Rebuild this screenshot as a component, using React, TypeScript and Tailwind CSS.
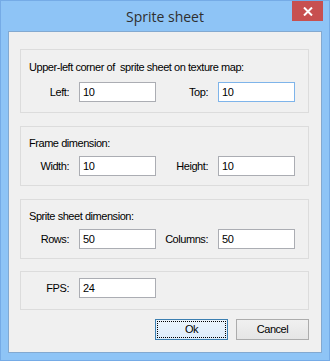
const font = "font-['Liberation_Sans',Arial,sans-serif] text-[11px] leading-[13px] tracking-[-0.45px] text-black";

function Field({ label, value, focused = false, labelW }: { label: string; value: string; focused?: boolean; labelW: string }) {
	return (
		<>
			<span className={`${labelW} text-right pr-[10px] shrink-0`}>{label}</span>
			<div
				className={`w-[77px] h-[20px] shrink-0 bg-white border flex items-center pl-[3px] ${
					focused ? 'border-[#7eb4ea]' : 'border-[#abadb3]'
				}`}
			>
				{value}
			</div>
		</>
	)
}

export default function App() {
	return (
		<div className="w-[330px] h-[361px] bg-[#8ec4f6] border border-[#75abe6] flex flex-col">
			{/* title bar */}
			<div className="relative h-[30px] shrink-0">
				<div className="absolute inset-x-0 top-[6px] text-center font-['Open_Sans','Noto_Sans',sans-serif] text-[14px] leading-[20px] text-[#2f2f2f]">
					Sprite sheet
				</div>
				<div className="absolute top-0 right-[6px] w-[31px] h-[20px] bg-[#c75050] flex items-center justify-center">
					<svg width="10" height="9" viewBox="0 0 10 9">
						<path d="M1 0.5 L9 8.5 M9 0.5 L1 8.5" stroke="white" strokeWidth="2" />
					</svg>
				</div>
			</div>

			{/* client area */}
			<div className={`ml-[7px] w-[314px] h-[322px] bg-[#f0f0f0] border border-[#83a9d0] pt-[17px] pl-[11px] flex flex-col ${font}`}>
				<div className="w-[289px] border border-[#dcdcdc] pt-[11px] pb-[10px] pl-[8px]">
					<div className="h-[13px]">Upper-left corner of&nbsp; sprite sheet on texture map:</div>
					<div className="flex items-center mt-[8px] -ml-[8px]">
						<Field label="Left:" value="10" labelW="w-[58px]" />
						<Field label="Top:" value="10" labelW="w-[62px]" focused />
					</div>
				</div>

				<div className="w-[289px] mt-[13px] border border-[#dcdcdc] pt-[10px] pb-[9px] pl-[8px]">
					<div className="h-[13px]">Frame dimension:</div>
					<div className="flex items-center mt-[6px] -ml-[8px]">
						<Field label="Width:" value="10" labelW="w-[58px]" />
						<Field label="Height:" value="10" labelW="w-[62px]" />
					</div>
				</div>

				<div className="w-[289px] mt-[13px] border border-[#dcdcdc] pt-[10px] pb-[9px] pl-[8px]">
					<div className="h-[13px]">Sprite sheet dimension:</div>
					<div className="flex items-center mt-[6px] -ml-[8px]">
						<Field label="Rows:" value="50" labelW="w-[58px]" />
						<Field label="Columns:" value="50" labelW="w-[62px]" />
					</div>
				</div>

				<div className="w-[289px] mt-[12px] border border-[#dcdcdc] pt-[6px] pb-[11px]">
					<div className="flex items-center">
						<Field label="FPS:" value="24" labelW="w-[58px]" />
					</div>
				</div>

				<div className="w-[289px] mt-[9px] flex justify-end gap-[8px]">
					<div className="w-[73px] h-[21px] border border-[#3c7fb1] bg-gradient-to-b from-[#ecf4fc] to-[#dcecfc] p-[1px]">
						<div className="w-full h-full border border-dotted border-black flex items-center justify-center">Ok</div>
					</div>
					<div className="w-[73px] h-[21px] border border-[#acacac] bg-gradient-to-b from-[#f0f0f0] to-[#e5e5e5] flex items-center justify-center">
						Cancel
					</div>
				</div>
			</div>
		</div>
	)
}
